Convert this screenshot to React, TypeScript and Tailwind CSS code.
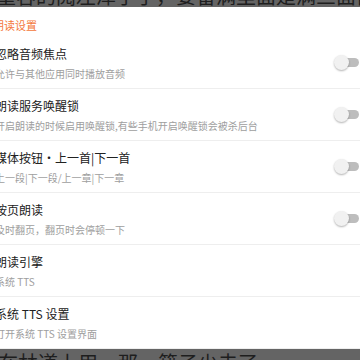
const rows = [
  { title: "忽略音频焦点", sub: "允许与其他应用同时播放音频", toggle: true },
  { title: "朗读服务唤醒锁", sub: "开启朗读的时候启用唤醒锁,有些手机开启唤醒锁会被杀后台", toggle: true },
  { title: "媒体按钮•上一首|下一首", sub: "上一段|下一段/上一章|下一章", toggle: true },
  { title: "按页朗读", sub: "及时翻页，翻页时会停顿一下", toggle: true },
  { title: "朗读引擎", sub: "系统 TTS", toggle: false },
  { title: "系统 TTS 设置", sub: "打开系统 TTS 设置界面", toggle: false },
];

function Toggle() {
  return <div className="relative w-[25px] h-[15px] mr-[1px] shrink-0">
    <div className="absolute right-0 top-[3px] w-[20px] h-[9px] rounded-full bg-[#bdbdbd]" />
    <div className="absolute left-0 top-0 w-[15px] h-[15px] rounded-full bg-[#f1f1f1] shadow-[0_1px_2px_rgba(0,0,0,0.3)]" />
  </div>
}

export default function App() {
  return <div
    className="w-[360px] h-[360px] overflow-hidden bg-[#646464] flex flex-col"
    style={{ fontFamily: '"Noto Sans CJK SC", "Noto Sans", sans-serif' }}
  >
    {/* dimmed page text behind the dialog */}
    <div className="h-[7px] overflow-hidden shrink-0">
      <div className="mt-[-16px] ml-[-4px] text-[20px] leading-[24px] whitespace-nowrap text-[#1e1e1e]">
        重容的阅左泽子了，要番满里面是满三面都定“白
      </div>
    </div>

    <div className="flex-1 bg-white">
      <div className="pt-[11px] pb-[5px] ml-[-7px] text-[11px] leading-[14px] text-[#f4773a]">
        朗读设置
      </div>
      {rows.map((r) => (
        <div key={r.title} className="h-[52px] flex items-center border-b border-[#eeeeee]">
          <div className="flex-1 min-w-0 ml-[-5px] pt-[2px]">
            <div className="text-[12px] leading-[16px] text-[#212121] whitespace-nowrap">{r.title}</div>
            <div className="mt-[5px] text-[10px] leading-[14px] text-[#9e9e9e] whitespace-nowrap">{r.sub}</div>
          </div>
          {r.toggle && <Toggle />}
        </div>
      ))}
    </div>

    <div className="h-[12px] overflow-hidden shrink-0">
      <div className="mt-[2px] ml-[-2px] text-[20px] leading-[24px] whitespace-nowrap text-[#1e1e1e]">
        在林道上用，那一籍子少去了
      </div>
    </div>
  </div>
}
